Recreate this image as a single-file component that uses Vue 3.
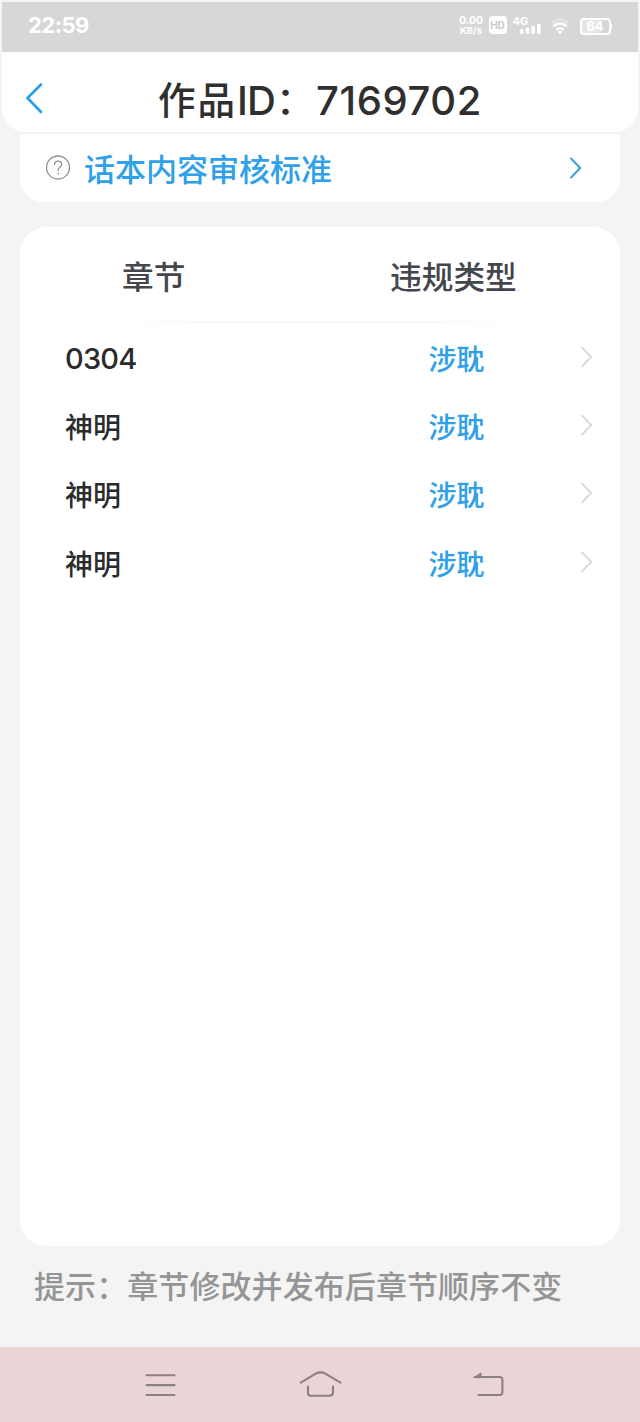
<script setup>
const rows = [
  { name: '0304', type: '涉耽', digits: true },
  { name: '神明', type: '涉耽' },
  { name: '神明', type: '涉耽' },
  { name: '神明', type: '涉耽' },
]
</script>

<template>
  <div class="screen">
    <div class="status">
      <span class="clock">22:59</span>
      <div class="indicators">
        <div class="speed"><span>0.00</span><span>KB/s</span></div>
        <span class="hd">HD</span>
        <div class="cell">
          <span class="net">4G</span>
          <svg class="bars" width="22" height="10" viewBox="0 0 22 10" fill="#fff">
            <rect x="0" y="5" width="3.6" height="5" rx="1.2" />
            <rect x="5.7" y="3.5" width="3.6" height="6.5" rx="1.2" />
            <rect x="11.4" y="2" width="3.6" height="8" rx="1.2" />
            <rect x="17" y="0" width="3.6" height="10" rx="1.2" />
          </svg>
        </div>
        <svg class="wifi" width="18" height="17" viewBox="0 0 18 17" fill="none" stroke="#fff" stroke-width="2.2">
          <path d="M1 5.2Q9-1.8 17 5.2" stroke-opacity=".35" />
          <path d="M2 8.4Q9 2.6 16 8.4" stroke-width="2.5" />
          <path d="M5 11.8Q9 8.6 13 11.8" stroke-width="2.4" />
          <path d="M6.4 13.4Q9 12 11.6 13.4L9 16.4Z" fill="#fff" stroke="none" />
        </svg>
        <div class="battery"><span>64</span></div>
        <i class="nub"></i>
      </div>
    </div>

    <header class="title-bar">
      <svg class="back" width="20" height="34" viewBox="0 0 20 34" fill="none" stroke="#2fa0ea" stroke-width="2.8" stroke-linecap="round" stroke-linejoin="round">
        <path d="M17 3.5L3.5 17L17 31" />
      </svg>
      <h1><span class="work">作品</span><span class="id">ID</span><span class="colon">：</span><span class="number">7169702</span></h1>
    </header>

    <section class="standard">
      <svg class="help" width="26" height="26" viewBox="0 0 26 26" fill="none" stroke="#8f8f8f" stroke-width="1.3">
        <circle cx="13" cy="12.5" r="11.5" />
        <path d="M9.5 9.7C9.5 4.9 16.7 5 16.7 9.3C16.7 11.9 13.1 12 13.1 15.5" stroke-linecap="round" />
        <circle cx="13.1" cy="18.3" r=".9" fill="#8f8f8f" stroke="none" />
      </svg>
      <span class="standard-label">话本内容审核标准</span>
      <svg class="go" width="14" height="24" viewBox="0 0 14 24" fill="none" stroke="#38a0dc" stroke-width="2" stroke-linecap="round" stroke-linejoin="round">
        <path d="M2 2.5L11.2 12L2 21.5" />
      </svg>
    </section>

    <main class="card">
      <div class="head">
        <span class="head-chapter">章节</span>
        <span class="head-type">违规类型</span>
      </div>
      <div class="rule"></div>
      <div v-for="(row, i) in rows" :key="i" class="row">
        <span class="name" :class="{ digits: row.digits }">{{ row.name }}</span>
        <span class="type">{{ row.type }}</span>
        <svg class="more" width="14" height="24" viewBox="0 0 14 24" fill="none" stroke="#d9d9d9" stroke-width="1.8" stroke-linecap="round" stroke-linejoin="round">
          <path d="M2 2.5L11.2 12L2 21.5" />
        </svg>
      </div>
    </main>

    <p class="hint">提示：章节修改并发布后章节顺序不变</p>

    <nav class="nav">
      <svg width="44" height="32" viewBox="0 0 44 32" fill="none" stroke="#8e8081" stroke-width="2.1" stroke-linecap="round">
        <path d="M8.5 6.3H36.5M8.5 16.1H36.5M8.5 26H36.5" />
      </svg>
      <svg width="44" height="32" viewBox="0 0 44 32" fill="none" stroke="#8e8081" stroke-width="2.1" stroke-linecap="round" stroke-linejoin="round">
        <path d="M2.8 13.6L17.7 4.6Q22.5 2.2 27.3 4.6L42.5 13.6" />
        <path d="M10 17.5V24Q10 26.8 12.8 26.8H31.5Q35 26.8 35 23.3V17.5" />
      </svg>
      <svg class="return" width="48" height="32" viewBox="0 0 48 32" fill="none" stroke="#8e8081" stroke-width="2.1" stroke-linecap="round" stroke-linejoin="round">
        <path d="M17 8H41.8Q44.4 8 44.4 11V23Q44.4 26 41.8 26H20.5" />
        <path d="M16 8.4L23 4V8.4Z" fill="#8e8081" stroke-width="1" />
      </svg>
    </nav>
  </div>
</template>

<style>
body {
  background: #f4f4f4;
}
</style>

<style scoped>
.screen {
  width: 640px;
  height: 1422px;
  display: flex;
  flex-direction: column;
  overflow: hidden;
  background: #f4f4f4;
  font-family: "Noto Sans CJK SC", sans-serif;
  font-weight: 500;
}
.status {
  height: 50px;
  flex: none;
  margin: 2px 2px 0;
  padding: 0 26px;
  box-sizing: border-box;
  display: flex;
  justify-content: space-between;
  background: #d7d7d7;
  color: #fff;
  font-family: Inter, sans-serif;
}
.clock {
  font-size: 22px;
  line-height: 46px;
  font-weight: 700;
  letter-spacing: -0.5px;
}
.indicators {
  display: flex;
  align-items: flex-start;
  padding-top: 13px;
}
.speed {
  display: flex;
  flex-direction: column;
  width: 25px;
  margin-top: 1px;
  font-weight: 700;
  line-height: 10px;
  font-size: 10.5px;
  text-align: center;
}
.speed span + span {
  font-size: 9.5px;
  line-height: 9px;
}
.hd {
  width: 18px;
  height: 18px;
  margin: 1px 0 0 5px;
  border-radius: 4px;
  background: #fff;
  color: #cacaca;
  font-size: 10px;
  line-height: 18px;
  font-weight: 700;
  text-align: center;
}
.cell {
  width: 29px;
  height: 18px;
  margin: 1px 0 0 6px;
  display: flex;
  flex-direction: column;
}
.net {
  font-size: 11px;
  line-height: 10px;
  height: 8px;
  font-weight: 700;
}
.bars {
  align-self: flex-end;
}
.wifi {
  margin: 3px 0 0 9px;
}
.battery {
  width: 31px;
  height: 17px;
  margin: 3px 0 0 11px;
  box-sizing: border-box;
  border: 2px solid #fff;
  border-radius: 4px;
  background: linear-gradient(90deg, #e6e6e6 64%, #d7d7d7 64%);
  background-clip: padding-box;
  font-size: 12.5px;
  line-height: 14px;
  font-weight: 800;
  text-align: center;
}
.nub {
  width: 1.5px;
  height: 5px;
  margin-top: 9px;
  background: #fff;
}
.title-bar {
  height: 80px;
  flex: none;
  margin: 0 2px;
  padding-left: 22px;
  display: flex;
  align-items: flex-start;
  background: #fff;
  border-radius: 0 0 24px 24px;
}
.back {
  flex: none;
  margin-top: 29px;
}
h1 {
  margin: 17px 0 0 114px;
  display: flex;
  height: 58px;
  color: #2f2f2f;
  font-weight: 500;
  font-size: 38px;
  line-height: 57px;
  white-space: nowrap;
}
.work {
  width: 79px;
  font-size: 37.5px;
  letter-spacing: 2px;
}
.id,
.number {
  font-family: Inter, sans-serif;
  font-size: 40px;
  line-height: 63px;
  font-weight: 550;
}
.id {
  width: 39px;
  letter-spacing: -0.8px;
}
.colon {
  width: 40px;
}
.number {
  letter-spacing: 0.6px;
}
.standard {
  height: 68px;
  flex: none;
  margin: 2px 20px 0;
  padding: 0 37px 0 25px;
  display: flex;
  align-items: center;
  background: #fff;
  border-radius: 0 0 24px 24px;
}
.standard-label {
  flex: 1;
  margin-left: 13px;
  color: #2fa0ea;
  font-size: 31px;
  line-height: 68px;
}
.card {
  height: 1019px;
  flex: none;
  margin: 25px 20px 0;
  background: #fff;
  border-radius: 26px;
}
.head {
  display: flex;
  height: 94px;
  color: #45464d;
  font-size: 31.7px;
  line-height: 96px;
}
.head-chapter {
  width: 268px;
  margin-left: 102px;
}
.rule {
  height: 2px;
  margin: 0 65px;
  background: linear-gradient(90deg, #fff, #f5f5f5 50%, #fff);
}
.row {
  display: flex;
  align-items: center;
  height: 68.2px;
  font-size: 28px;
  line-height: 66px;
}
.name,
.type {
  padding-top: 2px;
}
.name {
  width: 363.5px;
  margin-left: 45px;
  color: #2b2b2b;
}
.name.digits {
  padding-top: 4px;
  font-family: Inter, sans-serif;
  font-size: 29px;
  line-height: 60px;
  font-weight: 550;
  letter-spacing: -0.8px;
}
.type {
  width: 151px;
  color: #2fa0ea;
}
.hint {
  margin: 15px 0 0 34px;
  height: 86px;
  flex: none;
  color: #959595;
  font-size: 31px;
  line-height: 47px;
  letter-spacing: 0.08px;
  white-space: nowrap;
}
.nav {
  flex: 1;
  display: flex;
  align-items: flex-start;
  justify-content: center;
  gap: 116px;
  padding-top: 22px;
  background: #ebd4d6;
}
.return {
  margin-right: -4px;
}
</style>
